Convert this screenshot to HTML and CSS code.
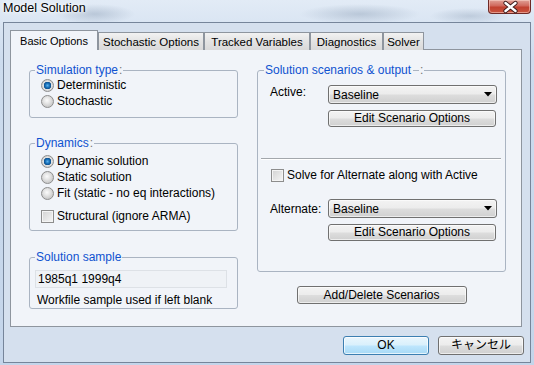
FILE: index.html
```html
<!DOCTYPE html>
<html lang="en">
<head>
    <meta charset="UTF-8">
    <title>Model Solution</title>
    <link rel="stylesheet" href="styles.css">
</head>
<body>
<div class="window">
    <div class="titlebar">
        <span class="title">Model Solution</span>
        <span class="close">
            <svg width="43" height="14" viewBox="0 0 43 14">
                <path d="M16.5 3 L26.5 11 M26.5 3 L16.5 11" stroke="#3b1a1a" stroke-width="4.2" stroke-linecap="round" fill="none"/>
                <path d="M16.5 3 L26.5 11 M26.5 3 L16.5 11" stroke="#ffffff" stroke-width="2.4" stroke-linecap="round" fill="none"/>
            </svg>
        </span>
    </div>

    <div class="client">
        <div class="tabs">
            <span class="tab active t-basic">Basic Options</span>
            <span class="tab t-stoch">Stochastic Options</span>
            <span class="tab t-track">Tracked Variables</span>
            <span class="tab t-diag">Diagnostics</span>
            <span class="tab t-solver">Solver</span>
        </div>

        <div class="panel">
            <div class="col-left">
                <fieldset class="group sim">
                    <legend>Simulation type<span class="colon">:</span></legend>
                    <div class="opt"><span class="radio on"></span>Deterministic</div>
                    <div class="opt"><span class="radio"></span>Stochastic</div>
                </fieldset>

                <fieldset class="group dyn">
                    <legend>Dynamics<span class="colon">:</span></legend>
                    <div class="opt"><span class="radio on"></span>Dynamic solution</div>
                    <div class="opt"><span class="radio"></span>Static solution</div>
                    <div class="opt"><span class="radio"></span>Fit (static - no eq interactions)</div>
                    <div class="opt structural"><span class="check"></span>Structural (ignore ARMA)</div>
                </fieldset>

                <fieldset class="group sample">
                    <legend>Solution sample</legend>
                    <div class="edit">1985q1 1999q4</div>
                    <div class="hint">Workfile sample used if left blank</div>
                </fieldset>
            </div>

            <div class="col-right">
                <fieldset class="group scen">
                    <legend>Solution scenarios &amp; output<span class="dash"></span><span class="colon">:</span></legend>
                    <div class="row active-row">
                        <span class="lbl">Active:</span>
                        <span class="select">Baseline<svg width="8" height="5" viewBox="0 0 8 5"><path d="M0 0 H8 L4 4.5 Z" fill="#000"/></svg></span>
                    </div>
                    <div class="btn edit-btn">Edit Scenario Options</div>
                    <div class="sep"></div>
                    <div class="opt alt-check"><span class="check"></span>Solve for Alternate along with Active</div>
                    <div class="row alt-row">
                        <span class="lbl">Alternate:</span>
                        <span class="select">Baseline<svg width="8" height="5" viewBox="0 0 8 5"><path d="M0 0 H8 L4 4.5 Z" fill="#000"/></svg></span>
                    </div>
                    <div class="btn edit-btn">Edit Scenario Options</div>
                </fieldset>
                <div class="btn add-btn">Add/Delete Scenarios</div>
            </div>
        </div>

        <div class="footer">
            <div class="btn ok">OK</div>
            <div class="btn cancel">キャンセル</div>
        </div>
    </div>
</div>
</body>
</html>
```

FILE: styles.css
```css
body { margin: 0; width: 534px; height: 365px; overflow: hidden; font-family: "Liberation Sans", "Noto Sans CJK JP", sans-serif; font-size: 12px; color: #000;
    background:
        radial-gradient(ellipse 40px 10px at 95px 14px, rgba(120,140,165,0.35), transparent),
        radial-gradient(ellipse 60px 10px at 360px 14px, rgba(120,140,165,0.35), transparent),
        radial-gradient(ellipse 40px 8px at 470px 16px, rgba(120,140,165,0.3), transparent),
        linear-gradient(to bottom, #e2ebf6, #cddcee 60px, #c4d5ea); }

.window { display: flex; flex-direction: column; height: 365px; }

.titlebar { height: 22px; display: flex; justify-content: space-between; align-items: flex-start; }
.title { padding-left: 3px; line-height: 16px; font-size: 12.5px; text-shadow: 0 0 6px #fff, 0 0 3px #fff; }
.close { width: 43px; height: 14px; margin-right: 3px; box-sizing: border-box; border: 1px solid #6e2a26; border-top: none; border-radius: 0 0 4px 4px;
    background: linear-gradient(to bottom, #e0a197 0, #d0685c 45%, #c14130 55%, #c9543f 100%); box-shadow: inset 0 0 0 1px rgba(255,220,210,0.5); }
.close svg { display: block; }

.client { margin: 0 3px; width: 528px; height: 341px; box-sizing: border-box; border: 1px solid #76859a; background: #d5e0ee; padding: 7px 6px 7px 6px; display: flex; flex-direction: column; }

/* tabs */
.tabs { height: 20px; display: flex; align-items: flex-end; position: relative; z-index: 1; }
.tab { height: 18px; box-sizing: border-box; border: 1px solid #8e959e; border-bottom: none; background: linear-gradient(to bottom, #f2f2f2, #e3e3e3 50%, #d9d9d9); font-size: 11.5px; line-height: 18px; text-align: center; white-space: nowrap; }
.tab.active { height: 20px; background: #f1f4f9; font-size: 11px; line-height: 20px; }
.t-basic { width: 88px; }
.t-stoch { width: 106px; }
.t-track { width: 106px; }
.t-diag { width: 73px; }
.t-solver { width: 41px; }

.panel { margin-top: -1px; width: 512px; height: 278px; box-sizing: border-box; border: 1px solid #8e959e; background: #f1f4f9; padding: 13px 0 0 18px; display: flex; gap: 19px; }

.col-left { width: 209px; display: flex; flex-direction: column; }
.col-right { width: 249px; display: flex; flex-direction: column; }

/* group boxes */
.group { margin: 0; min-width: 0; border: 1px solid #aab4c2; border-radius: 3px; padding: 0 6px 0 11px; }
.group legend { padding: 0 1px; margin-left: -6px; color: #0f52d0; line-height: 14px; height: 14px; white-space: nowrap; }
.group .colon { color: #777; margin-left: 1px; }
.group .dash { display: inline-block; width: 6px; border-top: 1px solid #aab4c2; vertical-align: middle; margin-left: 2px; }
.sim { padding-bottom: 8px; }
.dyn { margin-top: 18px; padding-top: 3px; padding-bottom: 6px; }
.sample { margin-top: 19px; padding: 0 6px 1px 5px; }
.sample legend { margin-left: 0; }

.opt { height: 16px; display: flex; align-items: center; white-space: nowrap; }
.structural { margin-top: 7px; }

.radio { width: 13px; height: 13px; box-sizing: border-box; border-radius: 50%; border: 1px solid #8d8d8d; margin-right: 3px; flex: none;
    background: radial-gradient(circle at 45% 40%, #fbfbfb 0, #e6e6e6 3px, #cdcdcd 6px); }
.radio.on { background: radial-gradient(circle at 50% 50%, #5fb2ea 0, #1b74bd 2px, #0d4f8c 3.5px, #e2e2e2 4px, #cdcdcd 6px); }
.check { width: 13px; height: 13px; box-sizing: border-box; border: 1px solid #8d8d8d; margin-right: 3px; flex: none;
    background: linear-gradient(135deg, #d2d2d2, #f6f6f6); box-shadow: inset 0 0 0 1px #f4f4f4; }

.edit { margin-top: 6px; width: 192px; height: 18px; box-sizing: border-box; border: 1px solid #dde1e6; background: #eff2f6; padding-left: 2px; line-height: 16px; }
.hint { margin-top: 5px; padding-left: 2px; line-height: 14px; }

/* scenarios */
.scen { padding: 0 8px 30px 12px; }
.row { display: flex; align-items: center; }
.active-row { margin-top: 8px; align-items: flex-start; }
.lbl { width: 58px; flex: none; line-height: 14px; }
.select { width: 169px; height: 19px; box-sizing: border-box; border: 1px solid #707070; border-radius: 3px; padding: 0 4px; display: flex; align-items: center; justify-content: space-between;
    background: linear-gradient(to bottom, #f3f3f3 0, #ececec 48%, #dddddd 52%, #d0d0d0 100%); box-shadow: inset 0 0 0 1px rgba(255,255,255,0.6); }
.alt-row { margin-top: 17px; }

.btn { box-sizing: border-box; border: 1px solid #707070; border-radius: 3px; text-align: center; white-space: nowrap;
    background: linear-gradient(to bottom, #f3f3f3 0, #ececec 48%, #dddddd 52%, #d0d0d0 100%); box-shadow: inset 0 0 0 1px rgba(255,255,255,0.6); }
.edit-btn { margin: 6px 0 0 58px; width: 168px; height: 17px; line-height: 15px; }
.sep { margin: 31px 0 0 -9px; width: 240px; border-top: 1px solid #a3a7ac; border-bottom: 1px solid #fff; }
.alt-check { margin-top: 8px; height: 14px; padding-left: 1px; }
.add-btn { margin: 14px auto 0; width: 170px; height: 18px; line-height: 16px; }

.footer { margin-top: 9px; display: flex; justify-content: flex-end; gap: 9px; }
.footer .btn { width: 86px; height: 19px; line-height: 17px; }
.footer .ok { border-color: #3c7fb1; background: linear-gradient(to bottom, #eaf6fd 0, #d9f0fc 48%, #bee6fd 52%, #a7d9f5 100%); box-shadow: inset 0 0 0 1px rgba(255,255,255,0.7); }
```
